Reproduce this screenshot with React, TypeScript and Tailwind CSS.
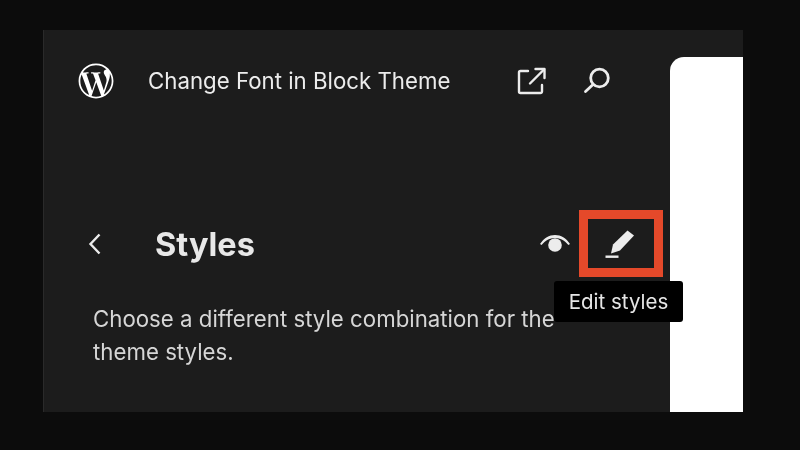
import { FaWordpressSimple } from "react-icons/fa";

const font = { fontFamily: "Inter, 'Liberation Sans', sans-serif" };

export default function App() {
  return (
    <div className="w-[800px] h-[450px] overflow-hidden bg-[#0c0c0c] pt-[30px] pl-[43px]" style={font}>
      <div className="relative flex w-[700px] h-[382px] bg-[#1c1c1c] border-l border-[#2a2a2a] blur-[0.4px]">
        <div className="w-[626px] shrink-0 flex flex-col">
          <div className="flex items-center h-[102px] pl-[34px]">
            <FaWordpressSimple className="w-[36px] h-[36px] text-white shrink-0" />
            <span className="ml-[34px] w-[370px] shrink-0 text-[22.250px] leading-[30px] text-[#ececec]">Change Font in Block Theme</span>
            <svg className="w-[30px] h-[30px] ml-[-1px] shrink-0" viewBox="0 0 30 30" fill="none" stroke="#ececec" strokeWidth="2.400" strokeLinecap="round" strokeLinejoin="round">
              <path d="M11 5H3.500a1.500 1.500 0 0 0-1.500 1.500v19a1.500 1.500 0 0 0 1.500 1.500h20a1.500 1.500 0 0 0 1.500-1.500V19" />
              <path d="M18.500 3H27.500V12" />
              <path d="M27 3.500 13 17.500" />
            </svg>
            <svg className="w-[30px] h-[30px] ml-[35px] shrink-0" viewBox="0 0 30 30" fill="none" stroke="#ececec" strokeWidth="2.800" strokeLinecap="round">
              <circle cx="17.500" cy="12" r="8.800" />
              <path d="M11 18.500 3.500 25.500" />
            </svg>
          </div>
          <div className="flex items-center h-[60px] mt-[82px] pl-[44px]">
            <svg className="w-[14px] h-[24px] shrink-0" viewBox="0 0 14 24" fill="none" stroke="#ececec" strokeWidth="2.400">
              <path d="M11.500 2.500 2.500 12l9 9.500" />
            </svg>
            <h1 className="ml-[53px] w-[384px] shrink-0 pt-[1px] text-[32.500px] leading-[40px] font-bold text-[#e8e8e8]">Styles</h1>
            <svg className="w-[32px] h-[22px] shrink-0" viewBox="0 0 32 22" fill="#ececec">
              <path d="M1 11C5 5 10 2 16 2s11 3 15 9l-1.600 1C25.800 7.500 21 5 16 5S6.200 7.500 2.600 12Z" />
              <circle cx="16" cy="12" r="6.800" />
            </svg>
            <svg className="w-[30px] h-[30px] ml-[34px] shrink-0" viewBox="0 0 30 30" fill="#ececec">
              <path d="M22.500 1.500 29 6.500 15 21.500 6 24.500 8 15.500Z" />
              <rect x="0.500" y="26.500" width="13" height="2.400" />
            </svg>
          </div>
          <p className="mt-[28px] ml-[49px] w-[470px] text-[22.250px] leading-[33px] text-[#d6d6d6]">
            Choose a different style combination for the theme styles.
          </p>
        </div>
        <div className="mt-[27px] flex-1 bg-white rounded-tl-[14px]" />
        <div className="absolute left-[535px] top-[180px] w-[84px] h-[67px] border-[9px] border-[#e5492a]" />
        <div className="absolute left-[510px] top-[251px] w-[129px] h-[41px] rounded-[3px] bg-black flex items-center justify-center text-[20.500px] leading-[24px] text-[#e6e6e6]">
          Edit styles
        </div>
      </div>
    </div>
  );
}
